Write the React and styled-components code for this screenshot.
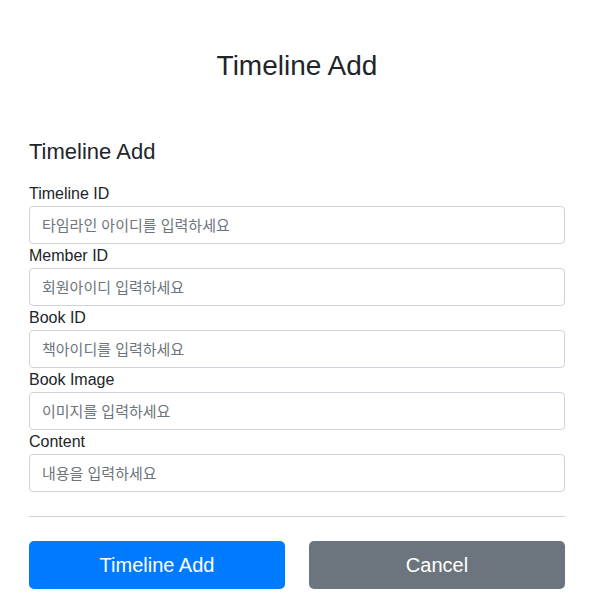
import React from 'react';
import styled, { createGlobalStyle } from 'styled-components';

const GlobalStyle = createGlobalStyle`
  body {
    margin: 0;
    background: #fff;
    color: #212529;
    font-family: "Liberation Sans", "Noto Sans CJK KR", Arial, sans-serif;
  }
  * {
    box-sizing: border-box;
  }
`;

const StPage = styled.div`
  padding: 49px 29px 0;
`;

const StPageTitle = styled.h3`
  margin: 0;
  font-size: 28px;
  line-height: 34px;
  font-weight: 500;
  text-align: center;
`;

const StForm = styled.form`
  margin-top: 56px;
  display: flex;
  flex-direction: column;
`;

const StFormTitle = styled.h4`
  margin: 0 0 17px;
  font-size: 22px;
  line-height: 26px;
  font-weight: 500;
`;

const StLabel = styled.label`
  display: block;
  font-size: 16px;
  line-height: 24px;
`;

const StInput = styled.input`
  display: block;
  width: 100%;
  height: 38px;
  padding: 6px 12px;
  font-size: 15px;
  font-family: "Liberation Sans", "Noto Sans CJK KR", sans-serif;
  color: #495057;
  background: #fff;
  border: 1px solid #ced4da;
  border-radius: 4px;
  outline: none;

  &::placeholder {
    color: #6c757d;
  }
`;

const StDivider = styled.hr`
  border: none;
  border-top: 1px solid #cfcfcf;
  margin: 24px 0;
`;

const StButtonRow = styled.div`
  display: grid;
  grid-template-columns: 1fr 1fr;
  gap: 24px;
`;

const StButton = styled.button`
  height: 48px;
  border: none;
  border-radius: 5px;
  font-size: 20px;
  font-family: "Liberation Sans", sans-serif;
  color: #fff;
  background: ${({ variant }) => (variant === 'secondary' ? '#6c757d' : '#007bff')};
  cursor: pointer;
`;

const fields = [
  { id: 'timelineId', label: 'Timeline ID', placeholder: '타임라인 아이디를 입력하세요' },
  { id: 'memberId', label: 'Member ID', placeholder: '회원아이디 입력하세요' },
  { id: 'bookId', label: 'Book ID', placeholder: '책아이디를 입력하세요' },
  { id: 'bookImage', label: 'Book Image', placeholder: '이미지를 입력하세요' },
  { id: 'content', label: 'Content', placeholder: '내용을 입력하세요' },
];

const App = () => {
  return (
    <StPage>
      <GlobalStyle />
      <StPageTitle>Timeline Add</StPageTitle>
      <StForm onSubmit={e => e.preventDefault()}>
        <StFormTitle>Timeline Add</StFormTitle>
        {fields.map(field => (
          <div key={field.id}>
            <StLabel htmlFor={field.id}>{field.label}</StLabel>
            <StInput id={field.id} placeholder={field.placeholder} />
          </div>
        ))}
        <StDivider />
        <StButtonRow>
          <StButton type="submit">Timeline Add</StButton>
          <StButton type="button" variant="secondary">
            Cancel
          </StButton>
        </StButtonRow>
      </StForm>
    </StPage>
  );
};

export default App;
